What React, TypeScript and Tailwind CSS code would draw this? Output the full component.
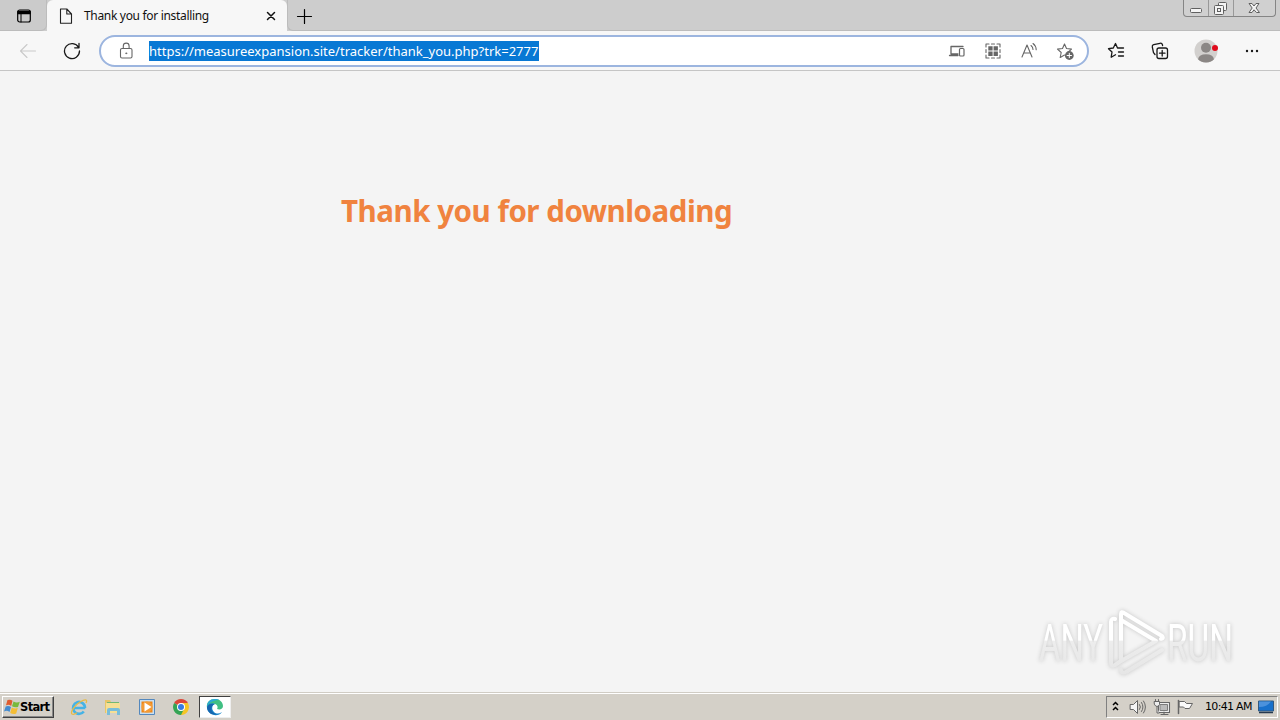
import type { ReactNode } from 'react'

function Icon({
  size = 18,
  className = '',
  children,
}: {
  size?: number
  className?: string
  children: ReactNode
}) {
  return (
    <svg
      width={size}
      height={size}
      viewBox={`0 0 ${size} ${size}`}
      fill="none"
      stroke="currentColor"
      strokeLinecap="round"
      strokeLinejoin="round"
      className={`shrink-0 ${className}`}
    >
      {children}
    </svg>
  )
}

const STAR = 'M8 1.5 10 6 15 6.6 11.3 10 M8 1.5 6 6 1 6.6 4.7 10 3.7 15 8 12.6'

function TabStrip() {
  return (
    <header className="flex h-[31px] bg-[#cdcdcd]">
      <div className="flex h-[31px] w-[47px] items-center justify-center rounded-br-md border-r border-b border-[#bcbcbc] bg-[#cbcbcb] pt-[2px] pl-[1px]">
        <Icon size={16} className="text-black">
          <rect x="1.7" y="2" width="12.6" height="12" rx="2" strokeWidth="1.2" />
          <path d="M2 3.5h12v2H2z" fill="currentColor" strokeWidth="1.3" />
          <path d="M5 6v8" strokeWidth="1" />
        </Icon>
      </div>
      <div className="flex w-[240px] items-center rounded-t-md bg-[#f7f7f7] pl-[11px] pr-[9px] pt-[1px]">
        <Icon size={16} className="text-[#222]">
          <path d="M2.5 1h6.3L13.5 6v9.3h-11zM8.8 1v5h4.7" strokeWidth="1.1" />
        </Icon>
        <span className="ml-[10px] flex-1 whitespace-nowrap font-['Noto_Sans','Open_Sans',sans-serif] text-[12px] tracking-[-0.32px] text-[#111]">
          Thank you for installing
        </span>
        <Icon size={14} className="text-[#111]">
          <path d="m3.5 3.5 7 7m0-7-7 7" strokeWidth="1.5" />
        </Icon>
      </div>
      <div className="flex flex-1 items-center rounded-bl-md border-b border-l border-[#bcbcbc] pl-[7px] pt-[1px]">
        <Icon size={18} className="text-black">
          <path d="M9.5 2.5v14M2.5 9.5h14" strokeWidth="1.2" />
        </Icon>
      </div>
      <WindowButtons />
    </header>
  )
}

function WindowButtons() {
  return (
    <div className="w-[97px] border-b border-[#bcbcbc] pr-[4px]">
      <div className="flex h-[17px] rounded-b-[4px] border border-t-0 border-[#858585] bg-[#d0d0d0] text-[#606060]">
        <div className="flex w-[25px] justify-center border-r border-[#999]">
          <svg width="13" height="16" fill="#f4f4f4" stroke="currentColor">
            <rect x="0.5" y="8.5" width="11" height="4" rx="1" />
          </svg>
        </div>
        <div className="flex w-[25px] justify-center border-r border-[#999]">
          <svg width="14" height="16" fill="#f4f4f4" stroke="currentColor">
            <rect x="4.5" y="2.5" width="8" height="8" rx="1" />
            <rect x="0.5" y="5.5" width="9" height="9" rx="1" />
            <rect x="3.5" y="8.5" width="3" height="3" />
          </svg>
        </div>
        <div className="flex flex-1 justify-center">
          <svg width="13" height="16" fill="#f4f4f4" stroke="currentColor">
            <path d="M1 3.5h3l2 2.5 2-2.5h3L8 8l3.5 4.5h-3L6 9.8l-2 2.7H1L4.2 8z" />
          </svg>
        </div>
      </div>
    </div>
  )
}

function AddressBar() {
  return (
    <div className="flex h-[32px] w-[990px] items-center rounded-full border-2 border-[#9cb5df] bg-white pl-[16px] pr-[13px] text-[#666]">
      <Icon size={18}>
        <rect x="3.5" y="6.5" width="11.5" height="9.5" rx="1.5" strokeWidth="1.1" />
        <path d="M6.3 6.5V4a2.9 2.9 0 0 1 5.8 0v2.5" strokeWidth="1.1" />
        <circle cx="9.2" cy="11.3" r="0.6" fill="currentColor" strokeWidth="0.6" />
      </Icon>
      <span className="ml-[14px] h-[20px] w-[390px] whitespace-nowrap bg-[#0878d4] font-['Noto_Sans','Open_Sans',sans-serif] text-[13px] leading-[20px] text-white">
        https://measureexpansion.site/tracker/thank_you.php?trk=2777
      </span>
      <div className="ml-auto flex items-center gap-[18px]">
        <Icon>
          <path d="M10 12H3V4.5h12M1.5 13.5H10" strokeWidth="1.3" />
          <rect x="11.5" y="6.5" width="4.5" height="7.5" rx="1" strokeWidth="1.2" />
        </Icon>
        <Icon>
          <path
            d="M2 5V2h3M7.5 2h3M13 2h3v3M16 7.5v3M16 13v3h-3M10.5 16h-3M5 16H2v-3M2 10.5v-3"
            strokeWidth="1.1"
          />
          <path
            d="M4.3 4.3h4.3v4.3H4.3zM9.6 4.3h4.3v4.3H9.6zM4.3 9.6h4.3v4.3H4.3zM9.6 9.6h4.3v4.3H9.6z"
            fill="currentColor"
            stroke="none"
          />
        </Icon>
        <Icon>
          <path d="M2 15 7 3l5 12M3.8 11h6.4" strokeWidth="1.1" />
          <path d="M11 3.5a5 5 0 0 1 2 4M13 1.5a8 8 0 0 1 3.2 6.2" strokeWidth="1.1" />
        </Icon>
        <Icon>
          <path d={STAR} strokeWidth="1.1" transform="translate(.5 .5)" />
          <circle cx="13.3" cy="13.5" r="4.4" fill="currentColor" stroke="none" />
          <path d="M13.3 11.3v4.4M11.1 13.5h4.4" stroke="white" strokeWidth="1" />
        </Icon>
      </div>
    </div>
  )
}

function Toolbar() {
  return (
    <div className="flex h-[40px] items-center border-b border-[#c5c5c5] bg-[#f7f7f7] pl-[19px] text-[#181818]">
      <Icon className="text-[#c9c9c9]">
        <path d="M16.5 9H1.5M8 2.5 1.5 9 8 15.5" strokeWidth="1.1" />
      </Icon>
      <Icon className="ml-[26px] mr-[18px]">
        <path d="M15.6 5.5A7.5 7.5 0 1 0 16.5 9M16 1.5v4.3h-4.3" strokeWidth="1.3" />
      </Icon>
      <AddressBar />
      <Icon className="ml-[18px]">
        <path
          d="m8.5 12.8-4.3 2.4L5 10 1.5 6.7l4.8-.7L8.5 1.5 10.5 6h6M11.5 10h5M11.5 14h5"
          strokeWidth="1.3"
        />
      </Icon>
      <Icon className="ml-[26px]">
        <rect x="6" y="6" width="10.5" height="10.5" rx="2" strokeWidth="1.3" />
        <path
          d="M11.2 8.5v5.5M8.5 11.2H14M4 12.5l-1.5-1.8L1.3 5a2 2 0 0 1 1.4-2.3L9 1.3a2 2 0 0 1 2.4 1.4l.2.8"
          strokeWidth="1.3"
        />
      </Icon>
      <svg width="24" height="24" viewBox="0 0 24 24" className="ml-[25px] shrink-0">
        <circle cx="12" cy="12" r="11.5" fill="#d2d0ce" />
        <circle cx="12" cy="8.7" r="5" fill="#8b8785" />
        <path d="M4 20.2q1-5 8-5t8 5a11.5 11.5 0 0 1-16 0" fill="#8b8785" />
        <circle cx="21" cy="9" r="3" fill="#e00b1c" />
      </svg>
      <Icon className="ml-[25px]">
        <g fill="currentColor" stroke="none">
          <circle cx="4" cy="9" r="1.2" />
          <circle cx="9" cy="9" r="1.2" />
          <circle cx="14" cy="9" r="1.2" />
        </g>
      </Icon>
    </div>
  )
}

function Watermark() {
  return (
    <svg
      width="212"
      height="76"
      viewBox="0 0 212 76"
      className="overflow-visible [filter:drop-shadow(0_0_2px_#c4c4c4)]"
    >
      <defs>
        <linearGradient id="fade" x1="0" y1="0" x2="0" y2="76" gradientUnits="userSpaceOnUse">
          <stop offset="0.46" stopColor="#ffffff" />
          <stop offset="0.48" stopColor="#ededed" />
          <stop offset="0.9" stopColor="#e6e6e6" />
        </linearGradient>
      </defs>
      <g fill="url(#fade)" className="font-['Roboto',sans-serif] text-[51px]">
        <text x="10" y="56" textLength="64" lengthAdjust="spacingAndGlyphs">
          ANY
        </text>
        <text x="138" y="56" textLength="66" lengthAdjust="spacingAndGlyphs">
          RUN
        </text>
      </g>
      <g
        fill="none"
        stroke="url(#fade)"
        strokeWidth="4"
        strokeLinecap="round"
        strokeLinejoin="round"
      >
        <path d="M86 14q-4-1-4 3v41q0 4 4 2l6-4V9q0-3 3-1l38 23q2 2-1 3" />
        <path d="M92 15l35 21-35 20M92 65q0 4 5 2l36-22" />
      </g>
    </svg>
  )
}

function QuickLaunch() {
  return (
    <div className="ml-[16px] flex items-center gap-[16px]">
      {/* Internet Explorer */}
      <svg width="18" height="18" viewBox="0 0 18 18" fill="none">
        <path d="M15.3 10H4.5M15 10a6 6 0 1 0-1.2 3.5" stroke="#45b3e6" strokeWidth="2.6" />
        <path
          d="M2 16c-2-2 3-9 8-12s8-3 6 1M2 16c1.5 1 4-.5 5-1.2"
          stroke="#e7ba45"
          strokeWidth="1.3"
        />
      </svg>
      {/* file explorer */}
      <svg width="18" height="18" viewBox="0 0 18 18">
        <path d="M1 2h5l1 2h8v11H1z" fill="#e7c568" />
        <path d="M3 4h12v2H3z" fill="#73b873" />
        <path d="M2 5h14v10H2z" fill="#f6df94" />
        <path d="M3 17v-5q0-2 2-2h9q2 0 2 2v5h-3v-4H6v4z" fill="#79bdd9" />
      </svg>
      {/* media player */}
      <svg width="18" height="18" viewBox="0 0 18 18">
        <path d="M1.5 1.5h15v15h-15z" fill="#c8dff2" stroke="#5488bd" />
        <path d="M3.5 3.5h11v11h-11z" fill="#ef8515" />
        <circle cx="9" cy="9" r="5.5" fill="#f49b35" />
        <path d="m6.5 4.5 7 4.5-7 4.5z" fill="white" />
      </svg>
      {/* Chrome */}
      <svg width="18" height="18" viewBox="0 0 18 18">
        <path d="M9 9 2.1 5A8 8 0 0 1 15.9 5z" fill="#dc4639" />
        <path d="M9 9V5h6.9A8 8 0 0 1 9 17z" fill="#f5c525" />
        <path d="M2.1 5 9 9l3 2-3 6A8 8 0 0 1 2.1 5" fill="#35a455" />
        <circle cx="9" cy="9" r="4" fill="white" />
        <circle cx="9" cy="9" r="3" fill="#367ce3" />
      </svg>
    </div>
  )
}

function Taskbar() {
  return (
    <footer className="flex h-[28px] items-center border-t border-[#d0ccc4] bg-[#d4d0c8] font-['DejaVu_Sans','Liberation_Sans',sans-serif] text-[11px] text-black shadow-[inset_0_1px_white]">
      <div className="ml-[2px] flex h-[22px] w-[52px] items-center border border-t-white border-r-[#404040] border-b-[#404040] border-l-white pl-px shadow-[inset_-1px_-1px_#888]">
        <svg width="16" height="16" viewBox="0 0 16 16" className="shrink-0">
          <path d="M3.5 1q3-1 5 .8L7.2 7Q5 5 2 6.3z" fill="#df5c2f" />
          <path d="M9.5 2.4q3 1.8 6.3.3L14 8q-3 1-6-.7z" fill="#78b93c" />
          <path d="M1.7 7.4q3-1.2 5.3.6L5.5 13Q3 11 0 12.5z" fill="#438bd0" />
          <path d="M7.8 8.5q3 1.7 6 .5L12.2 14.5q-3 1.3-6-.6z" fill="#f4bd35" />
        </svg>
        <span className="whitespace-nowrap pt-[2px] text-[11.5px] font-bold tracking-[-0.65px]">
          Start
        </span>
      </div>
      <QuickLaunch />
      <div className="ml-[9px] flex h-[22px] w-[32px] items-center justify-center border border-t-[#404040] border-r-[#eee] border-b-[#eee] border-l-[#404040] bg-white">
        <svg width="18" height="18" viewBox="0 0 18 18">
          <path d="M1 10C0 4 4 1 9 1c5 0 8 3.5 8 7 0 3-3 4-6 3 1-1 1-4-2-5C5 5 2 7 1 10" fill="#40bf83" />
          <path d="M1 9c0-5 3-8 8-8 2 0 3 .4 4 1C8 2 3 4 1 9" fill="#2ba8d8" />
          <path d="M1 9c1-3 5-5 8-3-3 1-4 5-1 8 2 2 5 2 8 0-4 6-15 3-15-5" fill="#1686cc" />
          <path d="M6 8c-2 4 1 8 5 8-5 2-10-2-10-7 1-3 5-4 8-3-1 0-2 1-3 2" fill="#1766ae" />
        </svg>
      </div>
      <SystemTray />
    </footer>
  )
}

function SystemTray() {
  return (
    <div className="ml-auto mr-[2px] flex h-[22px] w-[172px] items-center border border-t-[#808080] border-r-white border-b-white border-l-[#808080] pl-[5px] text-[#666]">
      <svg width="7" height="12" viewBox="0 0 7 12" fill="none" stroke="black" strokeWidth="1.5">
        <path d="m1 4 2.5-2.5L6 4M1 9l2.5-2.5L6 9" />
      </svg>
      <Icon className="ml-[10px]">
        <path d="M1.5 6.5h3l4-4v13l-4-4h-3z" fill="#f5f5f5" strokeWidth="1" />
        <path d="M10.5 6.5q2 2.5 0 5M12.5 4.5q3 4.5 0 9M14.5 3q4 6 0 12" strokeWidth="1" />
      </Icon>
      <Icon className="ml-[6px]">
        <path d="M5.5 4.5h11v10h-11zM8 16.5h7M11 14v2" fill="#eee" strokeWidth="1.1" />
        <path d="M7.5 6.5h7v6h-7z" fill="#bbb" strokeWidth="0.8" />
        <path
          d="M1.5 3.5h5v3q-1 2-2.5 2t-2.5-2zM2.5 1.5v2M5.5 1.5v2M4 9v6h2"
          fill="#eee"
          strokeWidth="1"
        />
      </Icon>
      <Icon className="ml-[5px]">
        <path d="M2.5 2.5v13" strokeWidth="1.5" />
        <path d="M3.5 3.5h5l2 2h6l-3 5H9L7.5 9h-4z" fill="#fafafa" strokeWidth="1" />
      </Icon>
      <span className="ml-[11px] w-[47px] whitespace-nowrap pt-[2px] tracking-[-0.68px] text-black">
        10:41 AM
      </span>
      <svg width="16" height="14" viewBox="0 0 16 14" className="ml-[6px]">
        <path d="M.5 1h15v10H.5z" fill="#1870cb" stroke="#33597f" />
        <path d="M1 7q8 0 12-5.5H1z" fill="#4b91dc" />
        <path d="M1 12.5h14" stroke="#26394f" strokeWidth="1.5" />
      </svg>
    </div>
  )
}

export default function App() {
  return (
    <div className="flex h-[720px] w-[1280px] flex-col overflow-hidden bg-[#f4f4f4]">
      <TabStrip />
      <Toolbar />
      <main className="flex flex-1 flex-col justify-between pt-[119px]">
        <h1 className="ml-[341px] whitespace-nowrap font-['Noto_Sans','Open_Sans',sans-serif] text-[29.5px] leading-[42px] font-bold tracking-[-0.47px] text-[#f0833f]">
          Thank you for downloading
        </h1>
        <div className="mr-[39px] mb-[11px] self-end">
          <Watermark />
        </div>
      </main>
      <Taskbar />
    </div>
  )
}
